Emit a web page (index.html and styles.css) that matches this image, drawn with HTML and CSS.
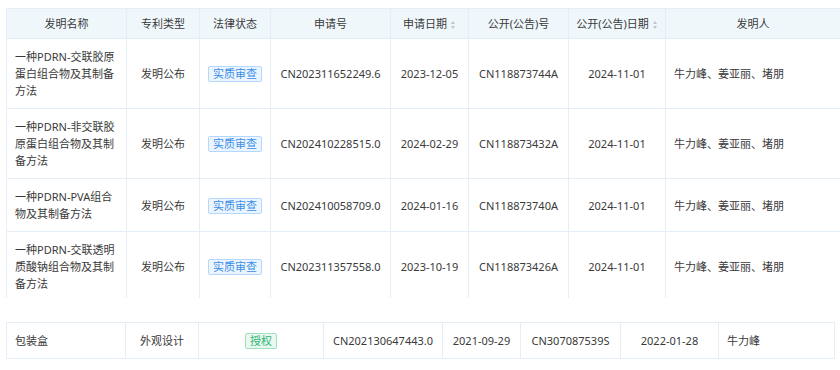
FILE: index.html
```html
<!DOCTYPE html>
<html lang="zh-CN">
<head>
    <meta charset="UTF-8">
    <title>专利列表</title>
    <link rel="stylesheet" href="styles.css">
</head>
<body>
    <!-- 发明专利 -->
    <div class="table-box">
        <table class="patents main">
            <colgroup>
                <col style="width:120px"><col style="width:73px"><col style="width:71px"><col style="width:120px">
                <col style="width:78px"><col style="width:100px"><col style="width:97px"><col style="width:175px">
            </colgroup>
            <thead>
                <tr>
                    <th>发明名称</th>
                    <th>专利类型</th>
                    <th>法律状态</th>
                    <th>申请号</th>
                    <th>申请日期<span class="sort"></span></th>
                    <th>公开(公告)号</th>
                    <th>公开(公告)日期<span class="sort"></span></th>
                    <th>发明人</th>
                </tr>
            </thead>
            <tbody>
                <tr>
                    <td class="left">一种PDRN-交联胶原蛋白组合物及其制备方法</td>
                    <td>发明公布</td>
                    <td><span class="tag blue">实质审查</span></td>
                    <td>CN202311652249.6</td>
                    <td>2023-12-05</td>
                    <td>CN118873744A</td>
                    <td>2024-11-01</td>
                    <td class="left">牛力峰、姜亚丽、堵朋</td>
                </tr>
                <tr>
                    <td class="left">一种PDRN-非交联胶原蛋白组合物及其制备方法</td>
                    <td>发明公布</td>
                    <td><span class="tag blue">实质审查</span></td>
                    <td>CN202410228515.0</td>
                    <td>2024-02-29</td>
                    <td>CN118873432A</td>
                    <td>2024-11-01</td>
                    <td class="left">牛力峰、姜亚丽、堵朋</td>
                </tr>
                <tr>
                    <td class="left">一种PDRN-PVA组合物及其制备方法</td>
                    <td>发明公布</td>
                    <td><span class="tag blue">实质审查</span></td>
                    <td>CN202410058709.0</td>
                    <td>2024-01-16</td>
                    <td>CN118873740A</td>
                    <td>2024-11-01</td>
                    <td class="left">牛力峰、姜亚丽、堵朋</td>
                </tr>
                <tr>
                    <td class="left">一种PDRN-交联透明质酸钠组合物及其制备方法</td>
                    <td>发明公布</td>
                    <td><span class="tag blue">实质审查</span></td>
                    <td>CN202311357558.0</td>
                    <td>2023-10-19</td>
                    <td>CN118873426A</td>
                    <td>2024-11-01</td>
                    <td class="left">牛力峰、姜亚丽、堵朋</td>
                </tr>
            </tbody>
        </table>
    </div>

    <!-- 外观设计 -->
    <table class="patents second">
        <colgroup>
            <col style="width:119px"><col style="width:73px"><col style="width:125px"><col style="width:119px">
            <col style="width:78px"><col style="width:100px"><col style="width:98px"><col style="width:116px">
        </colgroup>
        <tbody>
            <tr>
                <td class="left">包装盒</td>
                <td>外观设计</td>
                <td><span class="tag green">授权</span></td>
                <td>CN202130647443.0</td>
                <td>2021-09-29</td>
                <td>CN307087539S</td>
                <td>2022-01-28</td>
                <td class="left">牛力峰</td>
            </tr>
        </tbody>
    </table>
</body>
</html>
```

FILE: styles.css
```css
body {
    margin: 8px 0 0 6px;
    font-family: "Noto Sans", "Noto Sans CJK SC", sans-serif;
    font-size: 11px;
    color: #3a3a3a;
    background-color: #fff;
    overflow: hidden;
}
.table-box {
    height: 290px;
    overflow: hidden;
}
.patents {
    border-collapse: collapse;
    table-layout: fixed;
}
.patents.main {
    width: 834px;
}
.patents.second {
    width: 828px;
    margin-top: 24px;
}
.patents th,
.patents td {
    border: 1px solid #e5eef6;
    text-align: center;
    vertical-align: middle;
    line-height: 17px;
    padding: 9px 8px;
    word-break: break-all;
}
.patents th {
    background-color: #f0f7fb;
    font-weight: normal;
    padding: 6px 4px;
    white-space: nowrap;
}
.patents td.left {
    text-align: left;
}
.sort {
    display: inline-block;
    position: relative;
    width: 5px;
    height: 8px;
    margin-left: 4px;
    vertical-align: -1px;
}
.sort::before,
.sort::after {
    content: "";
    position: absolute;
    left: 0;
    border-left: 2.5px solid transparent;
    border-right: 2.5px solid transparent;
}
.sort::before {
    top: 0;
    border-bottom: 3px solid #c0c4cc;
}
.sort::after {
    bottom: 0;
    border-top: 3px solid #c0c4cc;
}
.tag {
    display: inline-block;
    padding: 0 4px;
    line-height: 14px;
    border: 1px solid;
    border-radius: 2px;
}
.tag.blue {
    color: #3a8ee6;
    background-color: #ecf5ff;
    border-color: #b3d8ff;
}
.tag.green {
    color: #2fb673;
    background-color: #e9f8f0;
    border-color: #9fe0bf;
}
```
